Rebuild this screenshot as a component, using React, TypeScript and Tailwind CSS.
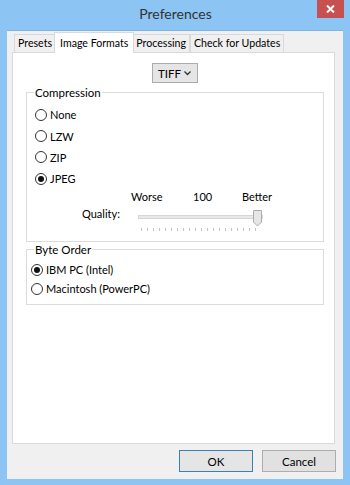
import { useState } from "react";

const Radio = (props: { label: string; checked: boolean; onClick: () => void; tall?: boolean }) => {
  return (
    <div
      className={`flex items-center gap-[3px] cursor-default ${props.tall ? "h-[21.4px]" : "h-[19px]"}`}
      onClick={props.onClick}
    >
      <span className="w-[12px] h-[12px] rounded-full border border-[#333] bg-white flex items-center justify-center">
        {props.checked && <span className="w-[6px] h-[6px] rounded-full bg-[#111]"></span>}
      </span>
      <span>{props.label}</span>
    </div>
  );
};

const Tab = (props: { label: string; active?: boolean }) => {
  if (props.active) {
    return (
      <div className="h-[21px] px-[5px] bg-white border border-[#d9d9d9] border-b-0 -mb-px relative z-10 -mx-[2px] flex items-center whitespace-nowrap">
        {props.label}
      </div>
    );
  }
  return (
    <div className="h-[18px] px-[3px] bg-[#f0f0f0] border border-[#d9d9d9] border-b-0 flex items-center whitespace-nowrap">
      {props.label}
    </div>
  );
};

export default function App() {
  const [compression, setCompression] = useState("JPEG");
  const [order, setOrder] = useState("IBM PC (Intel)");
  const ticks = Array.from({ length: 20 }, (_, i) => i);

  return (
    <div
      className="w-[350px] h-[485px] bg-[#8cc4f4] flex flex-col text-[11px] leading-[15px] text-black"
      style={{ fontFamily: 'Lato, "Noto Sans", sans-serif' }}
    >
      {/* title bar */}
      <div className="h-[30px] relative flex items-center justify-center">
        <span className="text-[14px] text-[#333] -mt-[3px] pl-[1px]">Preferences</span>
        <div className="absolute right-[6px] top-0 w-[27px] h-[18px] bg-[#c75050] flex items-center justify-center">
          <svg width="9" height="8" viewBox="0 0 9 8">
            <path d="M1 0.5 L8 7.5 M8 0.5 L1 7.5" stroke="white" strokeWidth="2" />
          </svg>
        </div>
      </div>

      {/* client */}
      <div className="mx-[7px] mb-[6px] flex-1 bg-[#f0f0f0] border-t border-[#7fb3e3] flex flex-col">
        <div className="flex items-end pl-[7px] pt-[1px] text-[10.6px]">
          <Tab label="Presets" />
          <Tab label="Image Formats" active />
          <Tab label="Processing" />
          <Tab label="Check for Updates" />
        </div>

        <div className="ml-[5px] mr-[8px] flex-1 bg-white border border-[#d9d9d9] flex flex-col">
          <div className="flex justify-center pt-[10px] pl-[3px]">
            <div className="w-[46px] h-[20px] bg-[#e5e5e5] border border-[#acacac] flex items-center justify-between pl-[5px] pr-[6px] text-[11.5px]">
              <span>TIFF</span>
              <svg width="7" height="5" viewBox="0 0 7 5">
                <path d="M0.5 0.5 L3.5 3.5 L6.5 0.5" stroke="#333" strokeWidth="1.3" fill="none" />
              </svg>
            </div>
          </div>

          <fieldset className="ml-[13px] mr-[10px] mt-[2px] border border-[#dcdcdc] pl-[8px] pb-[4px] h-[157px]">
            <legend className="px-[1px] -ml-[1px] text-[11.5px]">Compression</legend>
            <div className="pt-[4px] flex flex-col">
              {["None", "LZW", "ZIP", "JPEG"].map((c) => (
                <Radio key={c} tall label={c} checked={compression === c} onClick={() => setCompression(c)} />
              ))}
            </div>
            <div className="flex pl-[96px] mt-[-2px] h-[17px] items-center">
              <span className="w-[62px]">Worse</span>
              <span className="w-[49px]">100</span>
              <span>Better</span>
            </div>
            <div className="flex items-start">
              <span className="ml-[47px] w-[56px] mt-[1px]">Quality:</span>
              <div className="relative w-[125px] h-[27px]">
                <div className="absolute left-0 right-0 top-[10px] h-[4px] bg-[#e7eaea] border border-[#d6d6d6]"></div>
                <svg className="absolute left-[115px] top-[5px]" width="10" height="17" viewBox="0 0 10 17">
                  <path d="M0.5 0.5 H8.5 V12 L4.5 16 L0.5 12 Z" fill="#e6e6e6" stroke="#acacac" />
                </svg>
                <div className="absolute left-[3px] top-[23px] flex gap-[5px]">
                  {ticks.map((t) => (
                    <span key={t} className="w-px h-[3px] bg-[#c4c4c4]"></span>
                  ))}
                </div>
              </div>
            </div>
          </fieldset>

          <fieldset className="ml-[13px] mr-[10px] mt-[0px] border border-[#dcdcdc] pl-[4px] h-[63px]">
            <legend className="px-[1px] ml-[3px] text-[11.5px]">Byte Order</legend>
            <div className="pt-[3px] flex flex-col">
              {["IBM PC (Intel)", "Macintosh (PowerPC)"].map((o) => (
                <Radio key={o} label={o} checked={order === o} onClick={() => setOrder(o)} />
              ))}
            </div>
          </fieldset>
        </div>

        <div className="h-[35px] flex items-center justify-end gap-[9px] pr-[7px] pb-[1px]">
          <button className="w-[74px] h-[22px] bg-[#e5e5e5] border border-[#3c7fb1] text-black text-[11.5px]">OK</button>
          <button className="w-[74px] h-[22px] bg-[#e1e1e1] border border-[#adadad] text-black text-[11.5px]">Cancel</button>
        </div>
      </div>
    </div>
  );
}
